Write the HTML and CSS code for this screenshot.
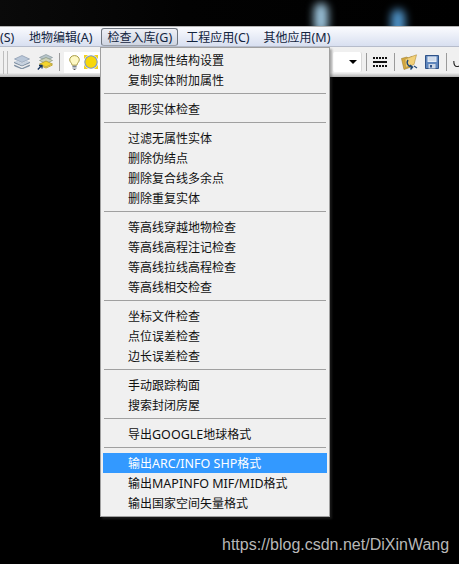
FILE: index.html
```html
<!DOCTYPE html>
<html>
  <head>
    <meta name="viewport" content="width=device-width, initial-scale=1" />
    <title>检查入库</title>
    <link rel="stylesheet" href="styles.css">
  </head>
  <body>
    <div class="titlebar">
      <div class="glow glow-left"></div>
      <div class="glow glow-right"></div>
    </div>

    <div class="menubar">
      <span class="menu-top menu-cut"><span class="lat">(S)</span></span>
      <span class="menu-top">地物编辑<span class="lat">(A)</span></span>
      <span class="menu-top menu-open">检查入库<span class="lat">(G)</span></span>
      <span class="menu-top">工程应用<span class="lat">(C)</span></span>
      <span class="menu-top">其他应用<span class="lat">(M)</span></span>
    </div>

    <div class="toolbar">
      <div class="tool-left">
        <span class="grip"></span>
        <svg class="stack-a" width="16" height="14" viewBox="0 0 16 14">
          <path d="M8 0.5 L15.5 4 L8 7.5 L0.5 4 Z" fill="#b9c7d8" stroke="#7b8ca3" stroke-width="0.6" />
          <path d="M0.5 7 L8 10.5 L15.5 7 L15.5 8 L8 11 L0.5 8 Z" fill="#8497ad" stroke="#66788f" stroke-width="0.5" />
          <path d="M0.5 10 L8 13.5 L15.5 10 L15.5 11 L8 14 L0.5 11 Z" fill="#7f92a8" stroke="#66788f" stroke-width="0.5" />
          <path d="M3 5.6 L8 8 L13 5.6 L15.5 7 L8 10.5 L0.5 7 Z" fill="#c7d2df" />
        </svg>
        <svg class="stack-b" width="16" height="16" viewBox="0 0 16 16">
          <path d="M9 0.5 L15.5 3.5 L9 6.5 L2.5 3.5 Z" fill="#b6c4c8" stroke="#7b8c90" stroke-width="0.6" />
          <path d="M9 3.5 L15.5 6.5 L9 9.5 L2.5 6.5 Z" fill="#cfd3b8" stroke="#7b8c70" stroke-width="0.6" />
          <path d="M9 7 L15.5 10 L9 13 L2.5 10 Z" fill="#f4d52c" stroke="#9a8620" stroke-width="0.6" />
          <path d="M2.5 11 L9 14 L15.5 11" fill="none" stroke="#c9a820" stroke-width="1" />
          <path d="M0.8 15.5 L4.5 11.8 M2 11.5 H5 V14.5" fill="none" stroke="#10305c" stroke-width="1.3" />
        </svg>
        <span class="tool-sep"></span>
        <div class="white-box">
          <svg width="11" height="15" viewBox="0 0 11 15">
            <path d="M5.5 0.6 C2.6 0.6 0.7 2.6 0.7 4.8 C0.7 6.9 2.8 8 3.2 10.2 H7.8 C8.2 8 10.3 6.9 10.3 4.8 C10.3 2.6 8.4 0.6 5.5 0.6 Z" fill="#fdf8c4" stroke="#a79a44" />
            <path d="M3.4 11.4 H7.6 M3.4 13 H7.6" stroke="#7c8594" stroke-width="1.2" />
            <path d="M4.6 14.5 H6.4" stroke="#555" />
          </svg>
          <svg width="14" height="14" viewBox="0 0 14 14">
            <path d="M0 0 H4 L0 4 Z M14 0 H10 L14 4 Z M0 14 H4 L0 10 Z M14 14 H10 L14 10 Z" fill="#f2d21e" />
            <circle cx="7" cy="7" r="6.2" fill="#f7d70a" stroke="#7f97bf" stroke-width="1.1" />
          </svg>
        </div>
      </div>
      <div class="tool-right">
        <div class="select-box"><span class="select-arrow"></span></div>
        <span class="tool-sep"></span>
        <div class="line-style">
          <span class="line-dots"></span>
          <span class="line-solid"></span>
          <span class="line-dots"></span>
        </div>
        <span class="tool-sep wide-left"></span>
        <svg width="17" height="16" viewBox="0 0 17 16">
          <path d="M0.5 4.5 L6 3 L7 4 L11 2.5 L10 13 L3 15.5 Z" fill="#d6a93e" stroke="#9d7c2b" stroke-width="0.6" />
          <path d="M4 5 L15.5 0.8 L13 10.5 L4.5 13.5 Z" fill="#f2d078" stroke="#b18f3a" stroke-width="0.6" />
          <path d="M7 6 C5 9 6.5 12 10.5 13 M8.8 11 L11.5 13.2 L9.5 15.5" fill="none" stroke="#1f4674" stroke-width="1.5" />
          <path d="M13 12 L16 14" stroke="#1f4674" stroke-width="1.2" />
        </svg>
        <svg class="wide-left" width="14" height="14" viewBox="0 0 14 14">
          <path d="M0.5 0.5 H13.5 V13.5 H0.5 Z" fill="#5f86bd" stroke="#2f5288" />
          <path d="M2.5 1.5 H11.5 V7 H2.5 Z" fill="#e6edf6" />
          <path d="M3.5 3 H10.5 M3.5 5 H10.5" stroke="#a9bcd6" stroke-width="0.7" />
          <path d="M3.5 9 H10.5 V13.5 H3.5 Z" fill="#cbd6e6" />
          <path d="M5 10 H7 V12.5 H5 Z" fill="#2f5288" />
        </svg>
        <span class="tool-sep wide-left"></span>
        <svg width="8" height="12" viewBox="0 0 8 12">
          <path d="M0.8 5 C0.8 9 2 10.5 4 10.5 C5.5 10.5 6.5 10 7.5 9" fill="none" stroke="#222" stroke-width="1.1" />
        </svg>
      </div>
    </div>

    <div class="dropdown">
      <div class="item">地物属性结构设置</div>
      <div class="item">复制实体附加属性</div>
      <div class="sep"></div>
      <div class="item">图形实体检查</div>
      <div class="sep"></div>
      <div class="item">过滤无属性实体</div>
      <div class="item">删除伪结点</div>
      <div class="item">删除复合线多余点</div>
      <div class="item">删除重复实体</div>
      <div class="sep"></div>
      <div class="item">等高线穿越地物检查</div>
      <div class="item">等高线高程注记检查</div>
      <div class="item">等高线拉线高程检查</div>
      <div class="item">等高线相交检查</div>
      <div class="sep"></div>
      <div class="item">坐标文件检查</div>
      <div class="item">点位误差检查</div>
      <div class="item">边长误差检查</div>
      <div class="sep"></div>
      <div class="item">手动跟踪构面</div>
      <div class="item">搜索封闭房屋</div>
      <div class="sep"></div>
      <div class="item">导出<span class="lat">GOOGLE</span>地球格式</div>
      <div class="sep"></div>
      <div class="item item-active">输出<span class="lat">ARC/INFO SHP</span>格式</div>
      <div class="item">输出<span class="lat">MAPINFO MIF/MID</span>格式</div>
      <div class="item">输出国家空间矢量格式</div>
    </div>

    <div class="watermark">https://blog.csdn.net/DiXinWang</div>
  </body>
</html>
```

FILE: styles.css
```css
html,
body {
  height: 100%;
}
body {
  margin: 0;
  background-color: black;
  overflow: hidden;
  position: relative;
  font-family: "Noto Sans", "Noto Sans CJK SC", sans-serif;
  font-size: 12px;
  color: #111;
}
.lat {
  font-size: 12.5px;
}
.titlebar {
  height: 26px;
  position: relative;
  overflow: hidden;
  background: linear-gradient(90deg, #0a0a0a, #020202 40%, #000);
}
.glow {
  position: absolute;
  top: 3px;
  width: 14px;
  height: 30px;
  border-radius: 7px;
  filter: blur(4px);
}
.glow-left {
  left: 314px;
  background-color: #9cc4dc;
}
.glow-right {
  left: 391px;
  top: 9px;
  background-color: #4f93c8;
}
.menubar {
  height: 19px;
  display: flex;
  align-items: flex-end;
  border-top: 1px solid #b4b4b4;
  border-bottom: 1px solid #b6bccb;
  background: linear-gradient(#fafbfe, #d8dff0);
}
.menu-top {
  padding: 0 7px;
  height: 18px;
  line-height: 20px;
  white-space: nowrap;
  color: #12243e;
}
.menu-cut {
  padding: 0;
  width: 22px;
}
.menu-open {
  margin: 0 1px;
  padding: 0 5px 0 6px;
  border: 1px solid #6f7680;
  border-bottom-color: #9aa0aa;
  border-radius: 3px;
  height: 16px;
  line-height: 18px;
  background: linear-gradient(#eef0f6, #cfd5e2);
}
.toolbar {
  height: 30px;
  display: flex;
  align-items: center;
  background: linear-gradient(#f0f0f0 86%, #b0b0b0);
}
.tool-left,
.tool-right {
  display: flex;
  align-items: center;
  flex-shrink: 0;
}
.tool-left svg,
.tool-right svg {
  flex-shrink: 0;
}
.tool-right {
  gap: 6px;
  margin-left: auto;
  margin-right: -2px;
}
.grip {
  width: 3px;
  height: 23px;
  margin: 0 6px 0 3px;
  border-left: 1px solid #bdbdbd;
  border-right: 1px solid #bdbdbd;
}
.stack-b {
  margin: 0 6px 0 7px;
}
.tool-sep {
  width: 1px;
  height: 18px;
  background-color: #9a9a9a;
}
.wide-left {
  margin-left: 1px;
}
.white-box {
  display: flex;
  align-items: center;
  gap: 4px;
  height: 21px;
  margin-left: 4px;
  padding: 0 2px 0 5px;
  background-color: white;
}
.select-box {
  width: 24px;
  height: 20px;
  margin-right: -2px;
  display: flex;
  align-items: center;
  justify-content: flex-end;
  padding-right: 4px;
  border-radius: 2px;
  background-color: white;
  border-right: 1px solid #d8d8d8;
}
.select-arrow {
  width: 0;
  height: 0;
  border-left: 4px solid transparent;
  border-right: 4px solid transparent;
  border-top: 4px solid black;
}
.line-style {
  display: flex;
  flex-direction: column;
  gap: 2px;
  width: 14px;
}
.line-solid {
  height: 2px;
  background-color: #111;
}
.line-dots {
  height: 2px;
  background: repeating-linear-gradient(90deg, #111 0 2px, transparent 2px 3px);
}
.dropdown {
  position: absolute;
  left: 100px;
  top: 47px;
  width: 228px;
  height: 464px;
  padding: 2px 0;
  border: 1px solid #a0a0a0;
  background-color: #f0f0f0;
  box-shadow: 2px 2px 2px rgba(60, 60, 60, 0.4);
}
.item {
  height: 20px;
  line-height: 22px;
  margin: 0 2px;
  padding-left: 25px;
  white-space: nowrap;
  color: #111;
}
.item-active {
  background-color: #3399ff;
  color: white;
}
.sep {
  height: 1px;
  margin: 3px 3px 5px 3px;
  background-color: #a0a0a0;
}
.watermark {
  position: absolute;
  left: 222px;
  top: 536px;
  font-family: "Liberation Sans", sans-serif;
  font-size: 16px;
  color: #b8b8b8;
  white-space: nowrap;
}
```
